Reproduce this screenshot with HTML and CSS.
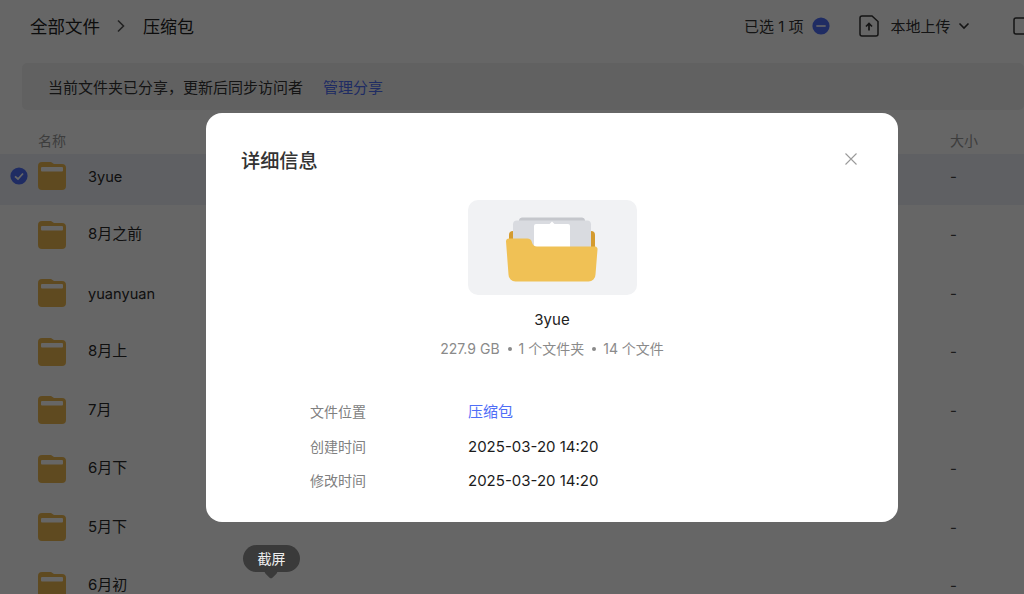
FILE: index.html
```html
<!DOCTYPE html>
<html lang="zh-CN">
<head>
<meta charset="utf-8">
<title>压缩包</title>
<link rel="stylesheet" href="styles.css">
</head>
<body>
<div class="page">
  <header class="topbar">
    <nav class="crumbs">
      <span class="crumb-root">全部文件</span>
      <svg class="crumb-sep" width="10" height="14" viewBox="0 0 10 14"><path d="M2 1.500 7.500 7 2 12.500" fill="none" stroke="#555" stroke-width="1.600"/></svg>
      <span>压缩包</span>
    </nav>
    <div class="actions">
      <span class="sel-text">已选 1 项</span>
      <svg class="minus" width="18" height="18" viewBox="0 0 18 18"><circle cx="9" cy="9" r="8.600" fill="#4f6ef7"/><path d="M5 9h8" stroke="#fff" stroke-opacity=".8" stroke-width="1.800" stroke-linecap="round"/></svg>
      <svg class="upload" width="20" height="22" viewBox="0 0 20 22"><path d="M3 1h10l6 5.500V19a2 2 0 0 1-2 2H3a2 2 0 0 1-2-2V3a2 2 0 0 1 2-2Z" fill="none" stroke="#333" stroke-width="1.500"/><path d="M10 15.500V9M7 11.500 10 8.500l3 3" fill="none" stroke="#333" stroke-width="1.700"/></svg>
      <span class="up-text">本地上传</span>
      <svg class="chev" width="12" height="8" viewBox="0 0 12 8"><path d="M1.500 1.500 6 6l4.500-4.500" fill="none" stroke="#333" stroke-width="1.600"/></svg>
      <svg class="newdir" width="20" height="18" viewBox="0 0 20 18"><path d="M3 1h8l4 3h3a1 1 0 0 1 1 1v10a2 2 0 0 1-2 2H3a2 2 0 0 1-2-2V3a2 2 0 0 1 2-2Z" fill="none" stroke="#333" stroke-width="1.500"/></svg>
    </div>
  </header>
  <div class="notice"><span>当前文件夹已分享，更新后同步访问者</span><a class="notice-link">管理分享</a></div>
  <div class="thead"><span>名称</span><span class="col-size">大小</span></div>
  <ul class="rows">
    <li class="row selected">
      <svg class="check" width="18" height="18" viewBox="0 0 18 18"><circle cx="9" cy="9" r="8.600" fill="#4f6ef7"/><path d="M5 9.300 8 12l5-5.500" fill="none" stroke="#fff" stroke-width="1.800"/></svg>
      <svg class="folder" width="28" height="28" viewBox="0 0 28 28"><path d="M4 0h9l3 2h8a4 4 0 0 1 4 4v18a4 4 0 0 1-4 4H4a4 4 0 0 1-4-4V4a4 4 0 0 1 4-4Z" class="f"/><rect x="3" y="5" width="22" height="4.500" rx="1" fill="#fff"/></svg>
      <span class="name latin">3yue</span><span class="col-size">-</span>
    </li>
    <li class="row">
      <svg class="folder" width="28" height="28" viewBox="0 0 28 28"><path d="M4 0h9l3 2h8a4 4 0 0 1 4 4v18a4 4 0 0 1-4 4H4a4 4 0 0 1-4-4V4a4 4 0 0 1 4-4Z" class="f"/><rect x="3" y="5" width="22" height="4.500" rx="1" fill="#fff"/></svg>
      <span class="name">8月之前</span><span class="col-size">-</span>
    </li>
    <li class="row">
      <svg class="folder" width="28" height="28" viewBox="0 0 28 28"><path d="M4 0h9l3 2h8a4 4 0 0 1 4 4v18a4 4 0 0 1-4 4H4a4 4 0 0 1-4-4V4a4 4 0 0 1 4-4Z" class="f"/><rect x="3" y="5" width="22" height="4.500" rx="1" fill="#fff"/></svg>
      <span class="name latin">yuanyuan</span><span class="col-size">-</span>
    </li>
    <li class="row">
      <svg class="folder" width="28" height="28" viewBox="0 0 28 28"><path d="M4 0h9l3 2h8a4 4 0 0 1 4 4v18a4 4 0 0 1-4 4H4a4 4 0 0 1-4-4V4a4 4 0 0 1 4-4Z" class="f"/><rect x="3" y="5" width="22" height="4.500" rx="1" fill="#fff"/></svg>
      <span class="name">8月上</span><span class="col-size">-</span>
    </li>
    <li class="row">
      <svg class="folder" width="28" height="28" viewBox="0 0 28 28"><path d="M4 0h9l3 2h8a4 4 0 0 1 4 4v18a4 4 0 0 1-4 4H4a4 4 0 0 1-4-4V4a4 4 0 0 1 4-4Z" class="f"/><rect x="3" y="5" width="22" height="4.500" rx="1" fill="#fff"/></svg>
      <span class="name">7月</span><span class="col-size">-</span>
    </li>
    <li class="row">
      <svg class="folder" width="28" height="28" viewBox="0 0 28 28"><path d="M4 0h9l3 2h8a4 4 0 0 1 4 4v18a4 4 0 0 1-4 4H4a4 4 0 0 1-4-4V4a4 4 0 0 1 4-4Z" class="f"/><rect x="3" y="5" width="22" height="4.500" rx="1" fill="#fff"/></svg>
      <span class="name">6月下</span><span class="col-size">-</span>
    </li>
    <li class="row">
      <svg class="folder" width="28" height="28" viewBox="0 0 28 28"><path d="M4 0h9l3 2h8a4 4 0 0 1 4 4v18a4 4 0 0 1-4 4H4a4 4 0 0 1-4-4V4a4 4 0 0 1 4-4Z" class="f"/><rect x="3" y="5" width="22" height="4.500" rx="1" fill="#fff"/></svg>
      <span class="name">5月下</span><span class="col-size">-</span>
    </li>
    <li class="row">
      <svg class="folder" width="28" height="28" viewBox="0 0 28 28"><path d="M4 0h9l3 2h8a4 4 0 0 1 4 4v18a4 4 0 0 1-4 4H4a4 4 0 0 1-4-4V4a4 4 0 0 1 4-4Z" class="f"/><rect x="3" y="5" width="22" height="4.500" rx="1" fill="#fff"/></svg>
      <span class="name">6月初</span><span class="col-size">-</span>
    </li>
  </ul>
</div>
<div class="overlay"></div>
<section class="modal">
  <div class="modal-head">
    <h2>详细信息</h2>
    <svg class="close" width="14" height="14" viewBox="0 0 14 14"><path d="M1.500 1.500l11 11M12.500 1.500l-11 11" stroke="#9a9a9a" stroke-width="1.100" fill="none"/></svg>
  </div>
  <div class="thumb">
    <svg width="92" height="66" viewBox="0 0 92 66">
      <path d="M3 18a4 4 0 0 1 4-4h78a4 4 0 0 1 4 4v22H3Z" fill="#d49b2f"/>
      <path d="M13 3a3 3 0 0 1 3-2.500h60a3 3 0 0 1 3 2.500v3H13Z" fill="#c5c7cc"/>
      <rect x="7" y="3.500" width="78" height="40" rx="4" fill="#d9dbe0"/>
      <path d="M30 7h13.500l2.500-2.500 2.500 2.500H62a2 2 0 0 1 2 2v25H28V9a2 2 0 0 1 2-2Z" fill="#fff"/>
      <path d="M0 24.500a3 3 0 0 1 3-3h18a5 5 0 0 1 5 4 5.500 5.500 0 0 0 5 4h58a2.500 2.500 0 0 1 2.500 3l-2 25a7 7 0 0 1-7 7H9.500a7 7 0 0 1-7-7L0 24.500Z" fill="#f0c155"/>
    </svg>
  </div>
  <div class="file-name">3yue</div>
  <div class="file-stats"><span>227.9 GB</span><i class="dot"></i><span>1 个文件夹</span><i class="dot"></i><span>14 个文件</span></div>
  <dl class="meta">
    <dt>文件位置</dt><dd class="link">压缩包</dd>
    <dt>创建时间</dt><dd>2025-03-20 14:20</dd>
    <dt>修改时间</dt><dd>2025-03-20 14:20</dd>
  </dl>
</section>
<div class="tooltip">截屏</div>
</body>
</html>
```

FILE: styles.css
```css
* { box-sizing: border-box; }
html, body { margin: 0; height: 100%; overflow: hidden; }
body {
  background: #fff;
  color: #2a2a2a;
  font-family: Inter, "Noto Sans CJK SC", sans-serif;
}
.page { width: 1024px; height: 594px; overflow: hidden; }

.topbar { height: 63px; padding: 0 0 12px 30px; display: flex; align-items: center; justify-content: space-between; }
.crumbs { display: flex; align-items: center; font-size: 17px; color: #222; white-space: nowrap; }
.crumb-root { font-size: 17.500px; }
.crumb-sep { margin: 0 17px 0 16px; }
.actions { display: flex; align-items: center; font-size: 15px; color: #333; width: 280px; flex: none; white-space: nowrap; }
.minus { margin-left: 8px; flex: none; }
.upload { margin-left: 29px; flex: none; }
.up-text { margin-left: 12px; }
.chev { margin-left: 7px; flex: none; }
.newdir { margin-left: 43px; flex: none; }

.notice { margin: 0 0 0 22px; height: 47px; border-radius: 5px; background: #f3f3f3; padding-left: 26px; display: flex; align-items: center; font-size: 15px; color: #333; }
.notice-link { margin-left: 20px; color: #4f6ef7; }

.thead { height: 44px; padding: 15px 0 0 38px; display: flex; align-items: center; justify-content: space-between; font-size: 14px; color: #9a9a9a; }
.col-size { width: 74px; flex: none; }

.rows { list-style: none; margin: 0; padding: 0; }
.row { height: 51px; margin-bottom: 7.500px; padding: 0 0 7px 38px; position: relative; display: flex; align-items: center; font-size: 15px; color: #2a2a2a; }
.row .col-size { margin-left: auto; color: #444; }
.selected { background: #eef1f8; }
.check { position: absolute; left: 10px; top: 13px; }
.f { fill: #eeba50; }
.folder { flex: none; }
.name { margin-left: 22px; line-height: 20px; margin-bottom: 1px; }
.latin { font-size: 14.600px; margin-bottom: -1px; }

.overlay { position: fixed; inset: 0; background: rgba(0, 0, 0, .6); }

.modal { position: fixed; left: 206px; top: 113px; width: 692px; height: 409px; background: #fff; border-radius: 16px; padding: 32px 35px 0; }
.modal-head { display: flex; align-items: center; justify-content: space-between; height: 30px; padding-right: 5px; }
.modal-head h2 { margin: 0; font-size: 19.200px; font-weight: 500; color: #333; }
.close { margin-top: -2px; }
.thumb { width: 169px; height: 95px; margin: 25px auto 0; background: #f1f2f4; border-radius: 10px; display: flex; align-items: center; justify-content: center; padding-top: 4px; }
.file-name { margin-top: 15px; text-align: center; font-size: 15px; font-weight: 400; line-height: 20px; color: #222; }
.file-stats { margin-top: 9px; display: flex; justify-content: center; align-items: center; font-size: 14px; line-height: 20px; color: #8a8a8a; }
.dot { width: 4px; height: 4px; border-radius: 50%; background: #8a8a8a; margin: 0 7px 0 8px; }
.meta { margin: 43px 0 0 69px; display: grid; grid-template-columns: 158px 1fr; row-gap: 14.500px; }
.meta dt { font-size: 14px; line-height: 20px; color: #808080; }
.meta dd { margin: 0; font-size: 15px; line-height: 20px; color: #1c1c1c; }
.meta .link { color: #4f6ef7; }

.tooltip { position: fixed; left: 243px; top: 545px; width: 57px; height: 27px; border-radius: 14px; background: #3a3a3a; color: #eee; font-size: 14px; line-height: 27px; text-align: center; }
.tooltip::after { content: ""; position: absolute; left: 23px; bottom: -5px; width: 10px; height: 10px; background: #3a3a3a; transform: rotate(45deg); border-radius: 2px; }
```
